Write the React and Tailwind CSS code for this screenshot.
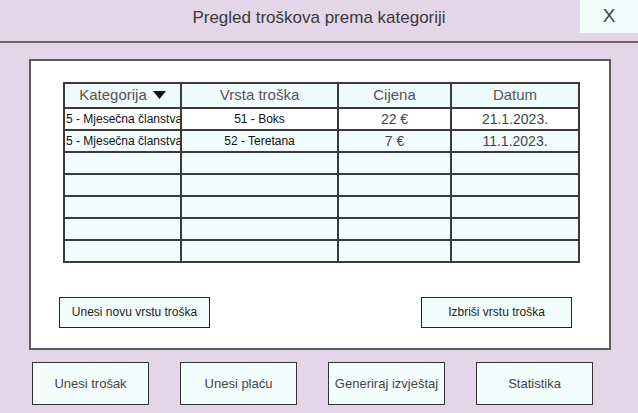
const rows = [
    { kat: '5 - Mjesečna članstva', vrsta: '51 - Boks', cijena: '22 €', datum: '21.1.2023.', bg: 'bg-white' },
    { kat: '5 - Mjesečna članstva', vrsta: '52 - Teretana', cijena: '7 €', datum: '11.1.2023.', bg: 'bg-[#f1fcfc]' },
    { kat: '', vrsta: '', cijena: '', datum: '', bg: 'bg-[#f1fcfc]' },
    { kat: '', vrsta: '', cijena: '', datum: '', bg: 'bg-[#f1fcfc]' },
    { kat: '', vrsta: '', cijena: '', datum: '', bg: 'bg-[#f1fcfc]' },
    { kat: '', vrsta: '', cijena: '', datum: '', bg: 'bg-[#f1fcfc]' },
    { kat: '', vrsta: '', cijena: '', datum: '', bg: 'bg-[#f1fcfc]' },
];

function BottomButton({ label }) {
    return (
        <button className="w-[117px] h-[43px] border border-[#333] bg-[#f3fdfc] text-[13px] text-[#444]">
            {label}
        </button>
    );
}

export default function App() {
    return (
        <div
            className="w-[638px] h-[413px] bg-[#e3d6e8] flex flex-col overflow-hidden"
            style={{ fontFamily: '"Liberation Sans", Arial, sans-serif' }}
        >
            <div className="h-[41px] grid grid-cols-[58px_1fr_58px] items-start">
                <div />
                <h1 className="h-[35px] flex items-center justify-center text-[17px] text-[#3a3a3a]">
                    Pregled troškova prema kategoriji
                </h1>
                <button className="h-[33px] bg-[#f5fcfc] text-[19px] text-[#444] flex items-center justify-center">
                    X
                </button>
            </div>
            <div className="h-[2px] bg-[#6a6070]" />

            <div className="mt-[16px] ml-[29px] mr-[27px] h-[291px] bg-white border-2 border-[#5a5a5a] flex flex-col">
                <div className="pt-[21px] pl-[32px]">
                    <table className="border-collapse table-fixed w-[515px] text-center">
                        <colgroup>
                            <col className="w-[117px]" />
                            <col className="w-[157px]" />
                            <col className="w-[113px]" />
                            <col className="w-[128px]" />
                        </colgroup>
                        <thead>
                            <tr className="h-[23px] bg-[#effbfb] text-[15px] text-[#555]">
                                <th className="border-2 border-[#3a3a3a] font-normal">
                                    <span className="inline-flex items-center gap-[6px]">
                                        Kategorija
                                        <svg width="13" height="8" viewBox="0 0 13 8">
                                            <path d="M0 0 L13 0 L6.5 8 Z" fill="#111" />
                                        </svg>
                                    </span>
                                </th>
                                <th className="border-2 border-[#3a3a3a] font-normal">Vrsta troška</th>
                                <th className="border-2 border-[#3a3a3a] font-normal">Cijena</th>
                                <th className="border-2 border-[#3a3a3a] font-normal">Datum</th>
                            </tr>
                        </thead>
                        <tbody>
                            {rows.map((r, i) => (
                                <tr key={i} className={`h-[22px] ${r.bg}`}>
                                    <td className="border-2 border-[#3a3a3a] text-left text-[12px] leading-[16px] text-[#111] whitespace-nowrap overflow-hidden pl-[1px]">
                                        {r.kat}
                                    </td>
                                    <td className="border-2 border-[#3a3a3a] text-[12px] leading-[16px] text-[#111]">{r.vrsta}</td>
                                    <td className="border-2 border-[#3a3a3a] text-[14px] leading-[16px] text-[#444]">{r.cijena}</td>
                                    <td className="border-2 border-[#3a3a3a] text-[14px] leading-[16px] text-[#444]">{r.datum}</td>
                                </tr>
                            ))}
                        </tbody>
                    </table>
                </div>
                <div className="mt-[34px] pl-[28px] pr-[37px] flex justify-between">
                    <button className="w-[151px] h-[31px] border border-[#222] bg-[#f3fdfc] text-[12px] text-[#222]">
                        Unesi novu vrstu troška
                    </button>
                    <button className="w-[151px] h-[31px] border border-[#222] bg-[#f3fdfc] text-[12px] text-[#222]">
                        Izbriši vrstu troška
                    </button>
                </div>
            </div>

            <div className="mt-[12px] ml-[32px] flex gap-[31px]">
                <BottomButton label="Unesi trošak" />
                <BottomButton label="Unesi plaću" />
                <BottomButton label="Generiraj izvještaj" />
                <BottomButton label="Statistika" />
            </div>
        </div>
    );
}
